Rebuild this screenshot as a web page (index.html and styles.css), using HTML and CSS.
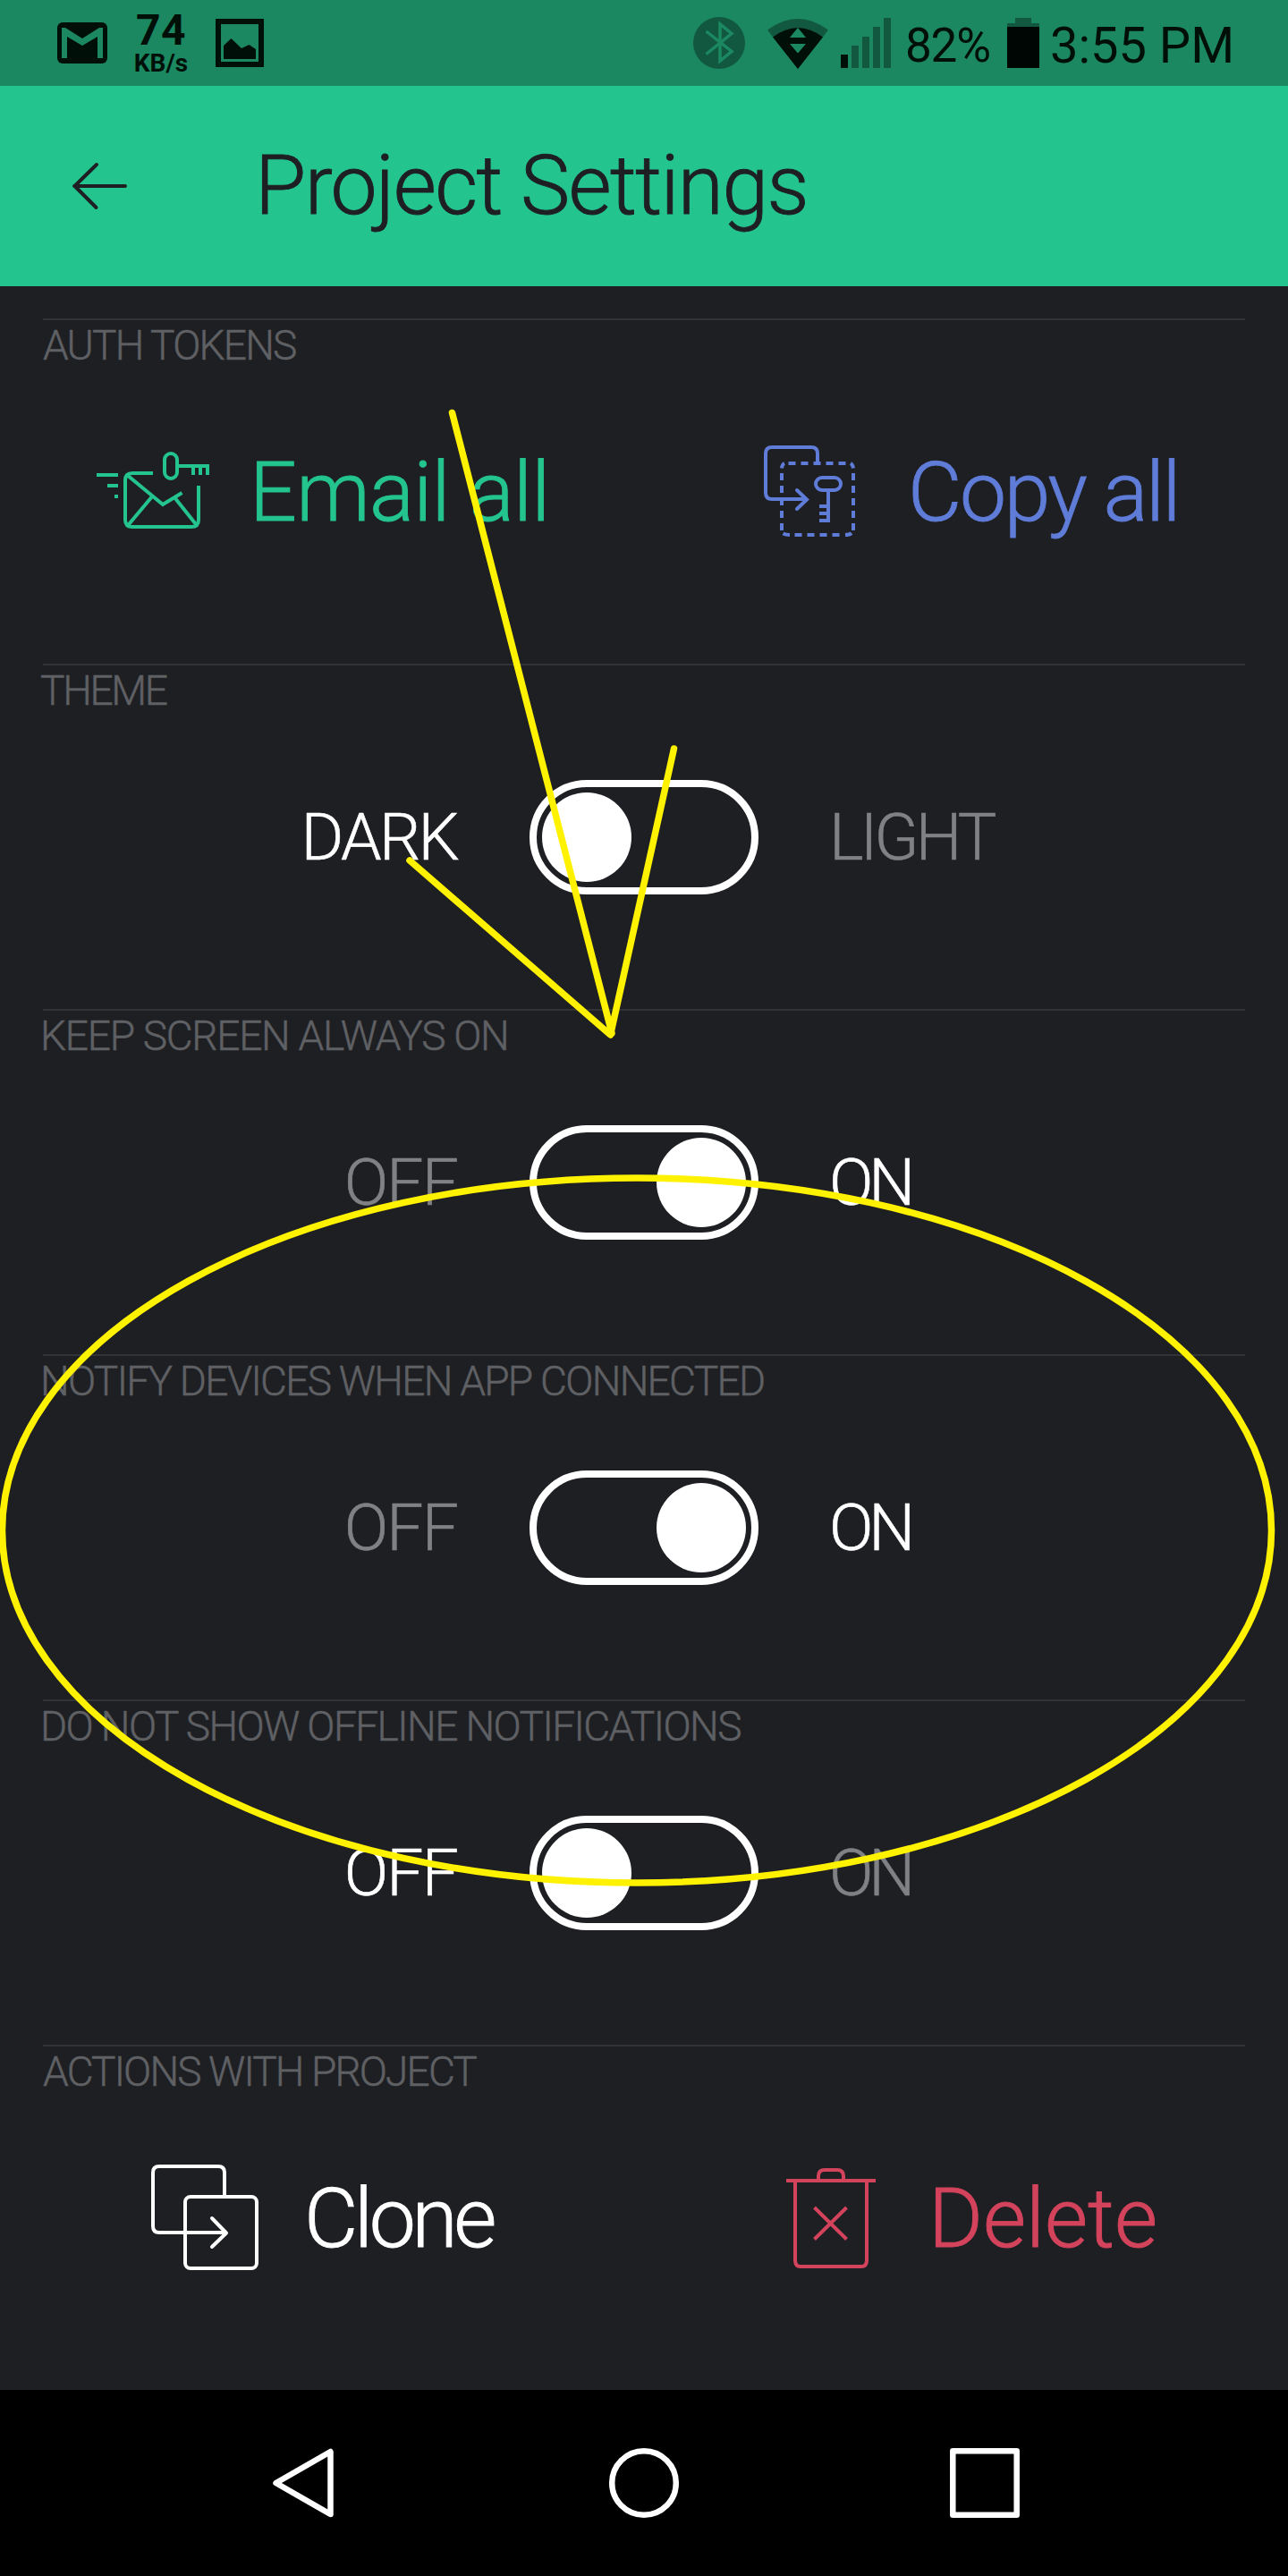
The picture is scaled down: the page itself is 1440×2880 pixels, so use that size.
FILE: index.html
```html
<!DOCTYPE html>
<html lang="en">
<head>
<meta charset="utf-8">
<title>Project Settings</title>
<link rel="stylesheet" href="styles.css">
</head>
<body>
<div class="screen">
  <div class="status">
    <svg class="gmail" viewBox="64 25 56 46"><rect x="64" y="25" width="56" height="46" rx="6" fill="#000f08"/><path d="M69 65V31H73L92 43L111 31H115V65H109V41L92 51L75 41V65Z" fill="#1b8862"/></svg>
    <div class="speed"><b class="speed-num">74</b><b class="speed-unit">KB/s</b></div>
    <svg class="photo" viewBox="241 21 54 54"><rect x="244" y="24" width="48" height="48" fill="none" stroke="#000f08" stroke-width="6"/><path d="M250 66V51L258.500 43L270 54L278.500 50L286 55V66Z" fill="#000f08"/></svg>
    <svg class="bluetooth" viewBox="775 19 58 58"><circle cx="804" cy="48" r="29" fill="#125840"/><path d="M789.500 35L818 57.500L805 68V27L818 37.500L789.500 60.500" fill="none" stroke="#1b8862" stroke-width="3.500"/></svg>
    <svg class="wifi" viewBox="858 19 68 57"><path d="M858 32.500Q892 7.500 926 32.500L892 76Z" fill="#125840"/><path d="M864 40.500Q892 19.500 920 40.500L892 76Z" fill="#000f08"/><path d="M883 41H901L892 30ZM883 48H901L892 58.500Z" fill="#1b8862"/></svg>
    <svg class="signal" viewBox="940 20 56 56"><path d="M952 51h8v25h-8zM964 41h8v35h-8zM976 30h8v46h-8zM988 20h8v56h-8z" fill="#125840"/><path d="M940 61h8v15h-8z" fill="#000f08"/></svg>
    <span class="percent">82%</span>
    <svg class="battery" viewBox="1126 20 36 56"><path d="M1135 20h18v6h9v50h-36V26h9z" fill="#125840"/><path d="M1126 30h36v46h-36z" fill="#000604"/></svg>
    <span class="clock">3:55 PM</span>
  </div>

  <header class="header">
    <svg class="back" viewBox="80 180 64 56"><path d="M140 208H83M108 184L83.500 208L107.500 232" fill="none" stroke="#1e1f23" stroke-width="4" stroke-linecap="round" stroke-linejoin="round"/></svg>
    <h1 class="title">Project Settings</h1>
  </header>

  <main class="settings">
    <section class="section">
      <h2 class="label ls-auth">AUTH TOKENS</h2>
      <div class="actions">
        <div class="action email">
          <svg viewBox="108 493 126 112" width="126" height="112" fill="none" stroke="currentColor" stroke-width="4">
            <path d="M108 530H132M120 542H132M128 554H132"/>
            <path d="M171 528H148Q140 528 140 536V580Q140 588 148 588H214Q222 588 222 580V542"/>
            <path d="M142 530L182 563L203.500 550M171 553L142.500 587M195 555L220.500 587"/>
            <rect x="184" y="506" width="14" height="28" rx="7"/><path d="M200 520H234M216 520V530M224 520V530M232 520V530"/>
          </svg>
          <span class="text ls-email">Email all</span>
        </div>
        <div class="action copy">
          <svg viewBox="854 494 102 112" width="102" height="112" fill="none" stroke="currentColor" stroke-width="4">
            <path d="M914 517V507Q914 500 907 500H863Q856 500 856 507V551Q856 558 863 558H902"/>
            <path d="M891 548L902 558.500L891 569" stroke-linecap="round"/>
            <path d="M881.500 518H947" stroke-dasharray="8 6"/><path d="M888.500 598H940" stroke-dasharray="8 6"/>
            <path d="M874 529V593.500M954 529V593.500" stroke-dasharray="8 6"/>
            <path d="M874 523.500Q874.500 519 877 518M951 518Q953.500 519.500 954 523.500M875.500 596.500Q878 598 883 598M945 598Q950 598 952 596"/>
            <rect x="912" y="534" width="28" height="14" rx="7"/><path d="M926 550V584M928 566H916M928 574H916M928 582H916"/>
          </svg>
          <span class="text ls-copy">Copy all</span>
        </div>
      </div>
    </section>

    <section class="section">
      <h2 class="label inset ls-theme">THEME</h2>
      <div class="choice">
        <span class="option left on ls-dark">DARK</span><span class="toggle"><i class="knob"></i></span><span class="option right ls-light">LIGHT</span>
      </div>
    </section>

    <section class="section">
      <h2 class="label inset ls-keep">KEEP SCREEN ALWAYS ON</h2>
      <div class="choice">
        <span class="option left ls-off">OFF</span><span class="toggle end"><i class="knob"></i></span><span class="option right on ls-on">ON</span>
      </div>
    </section>

    <section class="section">
      <h2 class="label inset ls-notify">NOTIFY DEVICES WHEN APP CONNECTED</h2>
      <div class="choice">
        <span class="option left ls-off">OFF</span><span class="toggle end"><i class="knob"></i></span><span class="option right on ls-on">ON</span>
      </div>
    </section>

    <section class="section">
      <h2 class="label inset ls-offline">DO NOT SHOW OFFLINE NOTIFICATIONS</h2>
      <div class="choice">
        <span class="option left on ls-off">OFF</span><span class="toggle"><i class="knob"></i></span><span class="option right ls-on">ON</span>
      </div>
    </section>

    <section class="section">
      <h2 class="label ls-actions">ACTIONS WITH PROJECT</h2>
      <div class="actions">
        <div class="action clone">
          <svg viewBox="169 2420 120 120" width="120" height="120" fill="none" stroke="currentColor" stroke-width="4">
            <path d="M251 2455V2429Q251 2422 244 2422H178Q171 2422 171 2429V2489Q171 2496 178 2496H252"/>
            <rect x="207" y="2456" width="80" height="80" rx="6"/>
            <path d="M237 2480L253 2496.500L237 2512" stroke-linecap="round" stroke-linejoin="round"/>
          </svg>
          <span class="text ls-clone">Clone</span>
        </div>
        <div class="action delete">
          <svg viewBox="879 2423 100 114" width="100" height="114" fill="none" stroke="currentColor" stroke-width="4">
            <path d="M879 2438H979M915 2437V2433Q915 2426 922 2426H936Q943 2426 943 2433V2437"/>
            <path d="M889 2439V2527Q889 2534 895 2534H963Q969 2534 969 2527V2439M910.500 2468L946.500 2503.500M946.500 2468L910.500 2503.500"/>
          </svg>
          <span class="text ls-delete">Delete</span>
        </div>
      </div>
    </section>
  </main>

  <nav class="nav">
    <svg viewBox="303 2734 72 84" width="72" height="84" fill="none" stroke="#fff" stroke-width="6.500" stroke-linejoin="round"><path d="M369.500 2741V2811L308.500 2776Z"/></svg>
    <svg viewBox="680 2736 80 80" width="80" height="80" fill="none" stroke="#fff" stroke-width="6.500"><circle cx="720" cy="2776" r="35.800"/></svg>
    <svg viewBox="1061 2736 80 80" width="80" height="80" fill="none" stroke="#fff" stroke-width="6.500" stroke-linejoin="round"><rect x="1065.300" y="2740.300" width="71.400" height="71.400"/></svg>
  </nav>

  <svg class="markup" viewBox="0 0 1440 2880" fill="none" stroke="#fff200" stroke-width="7.500" stroke-linecap="round" stroke-linejoin="round">
    <path d="M505.500 461.500L684 1155M458 962L682.500 1157L753.500 837"/>
    <ellipse cx="712" cy="1711" rx="709.500" ry="394"/>
  </svg>
</div>
</body>
</html>
```
FILE: styles.css
```css
* { box-sizing: border-box; margin: 0; padding: 0; }
body { background: #1e1f23; font-family: Roboto, "Liberation Sans", sans-serif; }
svg { display: block; flex: none; }
.screen { position: relative; width: 1440px; height: 2880px; overflow: hidden; display: flex; flex-direction: column; background: #1e1f23; }

.status { height: 96px; flex: none; display: flex; align-items: center; padding-left: 64px; background: #1b8862; color: #000f08; white-space: nowrap; }
.gmail { width: 56px; height: 46px; }
.speed { width: 60px; height: 96px; margin: 0 31px 0 30px; padding-top: 11px; display: flex; flex-direction: column; align-items: center; }
.speed-num { font-size: 48px; line-height: 46px; letter-spacing: 0.5px; }
.speed-unit { font-size: 28px; line-height: 27px; }
.photo { width: 54px; height: 54px; }
.bluetooth { width: 58px; height: 58px; margin-left: 480px; }
.wifi { width: 68px; height: 57px; margin-left: 25px; }
.signal { width: 56px; height: 56px; margin-left: 14px; }
.percent { width: 114px; padding: 6px 0 0 16px; font-size: 53px; line-height: 53px; letter-spacing: -1.2px; }
.battery { width: 36px; height: 56px; margin-left: 16px; }
.clock { margin-left: 12px; padding-top: 6px; font-size: 56px; line-height: 56px; }

.header { height: 224px; flex: none; display: flex; align-items: center; padding-left: 80px; background: #24c48e; color: #1e1f23; }
.back { width: 64px; height: 56px; }
.title { margin-left: 141px; padding-bottom: 1px; font-size: 93px; line-height: 93px; font-weight: 300; letter-spacing: -1.6px; white-space: nowrap; -webkit-text-stroke: 0.9px currentColor; }

.settings { padding: 36px 48px 0; flex: none; display: grid; grid-auto-rows: 386px; }
.section { border-top: 2px solid #323337; padding-top: 5px; display: flex; flex-direction: column; }
.label { font-size: 46px; line-height: 46px; font-weight: 300; color: #5f6064; white-space: nowrap; -webkit-text-stroke: 0.5px currentColor; }
.label.inset { margin-left: -3px; }
.actions, .choice { height: 282px; display: grid; align-items: center; }
.actions { grid-template-columns: 1fr 1fr; }
.choice { grid-template-columns: 544px 256px 544px; }

.action { display: flex; align-items: center; white-space: nowrap; }
.text { font-size: 93px; line-height: 93px; font-weight: 300; -webkit-text-stroke: 0.9px currentColor; }
.email { padding-left: 60px; gap: 45px; color: #24c48e; }
.copy { padding-left: 134px; gap: 59px; color: #5f7cd8; }
.clone { padding-left: 121px; gap: 51px; color: #fff; }
.delete { padding-left: 159px; gap: 59px; color: #d3435c; }

.option { font-size: 73px; line-height: 73px; font-weight: 300; color: #808184; -webkit-text-stroke: 0.6px currentColor; }
.option.on { color: #fff; }
.left { text-align: right; padding-right: 81px; }
.right { padding-left: 79px; }
.toggle { display: flex; width: 256px; height: 128px; padding: 6px; border: 8px solid #fff; border-radius: 64px; }
.toggle.end { justify-content: flex-end; }
.knob { width: 100px; height: 100px; border-radius: 50%; background: #fff; }

.ls-auth { letter-spacing: -1.78px; }
.ls-theme { letter-spacing: -2.3px; }
.ls-keep { letter-spacing: -1.25px; }
.ls-notify { letter-spacing: -1.69px; }
.ls-offline { letter-spacing: -1.55px; }
.ls-actions { letter-spacing: -1.84px; }
.ls-email { letter-spacing: -0.65px; }
.ls-copy { letter-spacing: -2.4px; }
.ls-clone { letter-spacing: -4.3px; }
.ls-dark { letter-spacing: -2.69px; }
.ls-light { letter-spacing: -3.7px; }
.ls-off { letter-spacing: -1.75px; }
.ls-on { letter-spacing: -5.2px; }

.nav { margin-top: auto; height: 208px; flex: none; display: grid; grid-template-columns: 377px 381px 80px; align-items: center; padding-left: 303px; background: #000; }
.markup { position: absolute; inset: 0; width: 1440px; height: 2880px; }
```
